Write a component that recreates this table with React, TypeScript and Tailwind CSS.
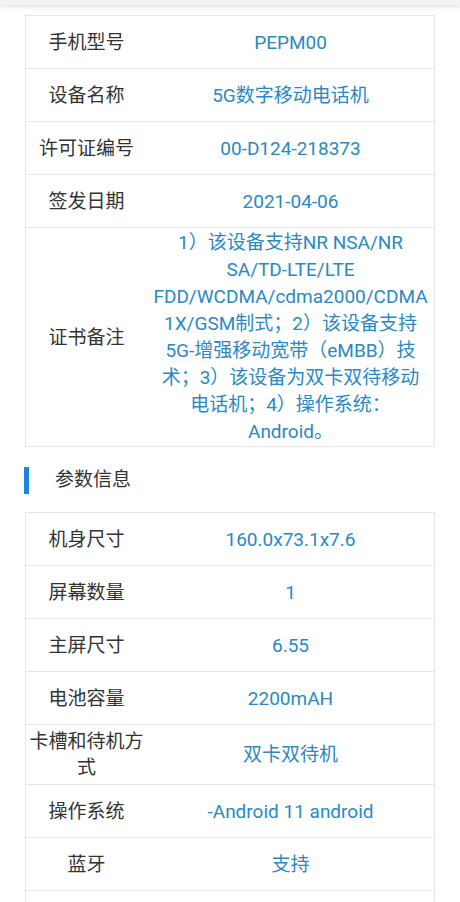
import React from "react";

type Row = { label: string; value: string | string[] };

const basicInfo: Row[] = [
  { label: "手机型号", value: "PEPM00" },
  { label: "设备名称", value: "5G数字移动电话机" },
  { label: "许可证编号", value: "00-D124-218373" },
  { label: "签发日期", value: "2021-04-06" },
  {
    label: "证书备注",
    value: [
      "1）该设备支持NR NSA/NR",
      "SA/TD-LTE/LTE",
      "FDD/WCDMA/cdma2000/CDMA",
      "1X/GSM制式；2）该设备支持",
      "5G-增强移动宽带（eMBB）技",
      "术；3）该设备为双卡双待移动",
      "电话机；4）操作系统：",
      "Android。",
    ],
  },
];

const params: Row[] = [
  { label: "机身尺寸", value: "160.0x73.1x7.6" },
  { label: "屏幕数量", value: "1" },
  { label: "主屏尺寸", value: "6.55" },
  { label: "电池容量", value: "2200mAH" },
  { label: "卡槽和待机方式", value: "双卡双待机" },
  { label: "操作系统", value: "-Android 11 android" },
  { label: "蓝牙", value: "支持" },
  // next row is below the fold, only its top edge shows
  { label: "", value: "" },
];

function InfoTable({ rows }: { rows: Row[] }) {
  return (
    <div className="mx-[25px] border border-[#e6e6e6]">
      {rows.map((row, index) => (
        <div
          key={index}
          className={`grid grid-cols-[121px_1fr] min-h-[53px] ${
            index < rows.length - 1 ? "border-b border-[#e6e6e6]" : ""
          }`}
        >
          <div className="flex items-center justify-center px-[3px] pt-1 pb-[3px] text-center text-[19px] leading-[26px] text-[#333333]">
            {row.label}
          </div>
          <div className="flex flex-col items-center justify-center py-[1px] text-center text-[19px] leading-[27px] text-[#2a89c2] whitespace-nowrap">
            {Array.isArray(row.value) ? row.value.map((line, i) => <span key={i}>{line}</span>) : row.value}
          </div>
        </div>
      ))}
    </div>
  );
}

export default function App() {
  return (
    <div
      className="min-h-screen bg-white"
      style={{ fontFamily: "Roboto, 'Noto Sans CJK SC', sans-serif" }}
    >
      <div className="h-[5px] bg-[#f3f3f3] shadow-[0_2px_4px_rgba(0,0,0,0.12)]" />
      <div className="mt-[10px]">
        <InfoTable rows={basicInfo} />
      </div>
      <div className="mt-[20px] flex items-center h-[27px] ml-[24px]">
        <div className="w-[5px] h-full bg-[#1c84dc]" />
        <span className="ml-[26px] text-[19px] text-[#333333]">参数信息</span>
      </div>
      <div className="mt-[18px]">
        <InfoTable rows={params} />
      </div>
    </div>
  );
}
